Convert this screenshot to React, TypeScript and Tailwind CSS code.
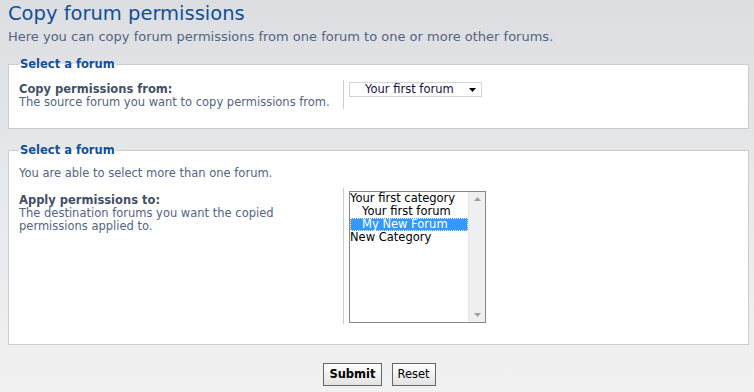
import React from "react";

const forums = [
  { name: "Your first category", indent: false, selected: false },
  { name: "Your first forum", indent: true, selected: false },
  { name: "My New Forum", indent: true, selected: true },
  { name: "New Category", indent: false, selected: false },
];

const App = () => {
  return (
    <div
      className="min-h-[392px] bg-gradient-to-b from-[#dcdee2] via-[#e8e9eb] to-[#f1f1f1] pl-2 pr-[5px] pt-[2px] text-[11.5px]"
      style={{ fontFamily: '"DejaVu Sans", Verdana, sans-serif' }}
    >
      <h1 className="text-[19.5px] leading-[24px] text-[#115098]">Copy forum permissions</h1>
      <p className="mt-[4px] text-[13px] leading-[14px] text-[#536482]">
        Here you can copy forum permissions from one forum to one or more other forums.
      </p>

      {/* source forum */}
      <fieldset className="mt-[13px] h-[72px] border border-[#cccccc] bg-white px-[10px]">
        <legend className="px-[1px] font-bold leading-[14px] text-[#115098]">Select a forum</legend>
        <div className="mt-[9px] flex">
          <div className="w-[324px] pt-[3px] leading-[13px]">
            <div className="font-bold text-[#425067]">Copy permissions from:</div>
            <div className="text-[#536482]">The source forum you want to copy permissions from.</div>
          </div>
          <div className="h-[29px] border-l border-[#cccccc] pl-[5px] pt-[2px]">
            <div className="flex h-[15px] w-[133px] items-center border border-[#d4d4d4] bg-white pl-[15px] pr-[5px] text-[11.5px] text-[#1a1040]">
              <span className="flex-1">Your first forum</span>
              <svg width="7" height="4" viewBox="0 0 7 4">
                <path d="M0 0h7L3.5 4z" fill="#000" />
              </svg>
            </div>
          </div>
        </div>
      </fieldset>

      {/* destination forums */}
      <fieldset className="mt-[14px] h-[202px] border border-[#cccccc] bg-white px-[10px]">
        <legend className="px-[1px] font-bold leading-[14px] text-[#115098]">Select a forum</legend>
        <p className="mt-[10px] leading-[13px] text-[#536482]">You are able to select more than one forum.</p>
        <div className="mt-[8px] flex">
          <div className="w-[324px] pt-[6px] leading-[13px]">
            <div className="font-bold text-[#425067]">Apply permissions to:</div>
            <div className="w-[275px] text-[#536482]">
              The destination forums you want the copied permissions applied to.
            </div>
          </div>
          <div className="h-[136px] border-l border-[#cccccc] pl-[5px] pt-[3px]">
            <div className="flex h-[132px] w-[137px] border border-[#828790] bg-white">
              <div className="flex-1 text-[11.5px] leading-[13px] text-black">
                {forums.map((f) => (
                  <div
                    key={f.name}
                    className={
                      f.selected
                        ? "bg-[#3399ff] pl-[12px] text-white outline-1 outline-dotted outline-offset-[-1px] outline-white"
                        : f.indent
                        ? "pl-[12px]"
                        : ""
                    }
                  >
                    {f.name}
                  </div>
                ))}
              </div>
              <div className="flex w-[17px] flex-col items-center justify-between border-l border-[#e6e6e6] bg-[#efefef] py-[5px]">
                <svg width="7" height="4" viewBox="0 0 7 4">
                  <path d="M3.5 0L7 4H0z" fill="#a0a0a0" />
                </svg>
                <svg width="7" height="4" viewBox="0 0 7 4">
                  <path d="M0 0h7L3.5 4z" fill="#a0a0a0" />
                </svg>
              </div>
            </div>
          </div>
        </div>
      </fieldset>

      <div className="mt-[18px] flex justify-center gap-[10px] pl-[2px]">
        <button className="h-[23px] border border-[#666666] bg-gradient-to-b from-white to-[#e3e3e3] px-[5px] font-bold text-black">
          Submit
        </button>
        <button className="h-[23px] border border-[#666666] bg-gradient-to-b from-white to-[#e3e3e3] px-[5px] text-black">
          Reset
        </button>
      </div>
    </div>
  );
};

export default App;
